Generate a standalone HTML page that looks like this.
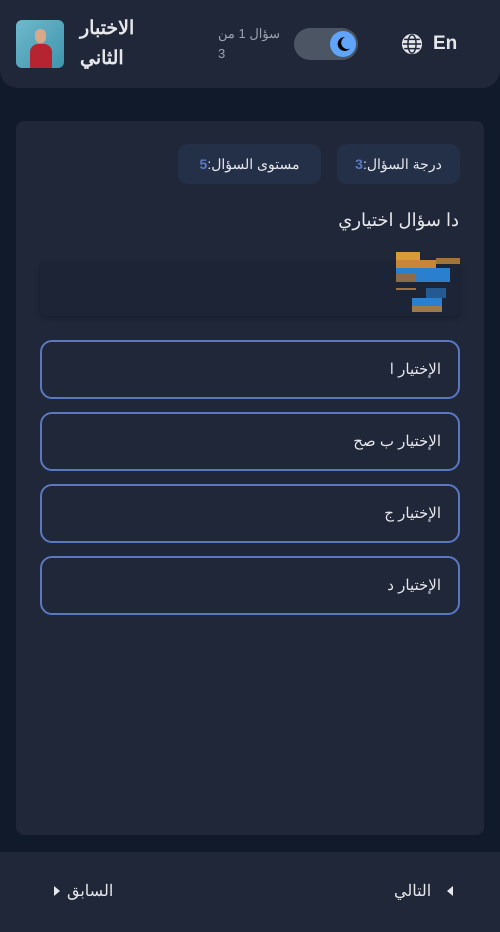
<!DOCTYPE html>
<html><head><meta charset="utf-8"><style>
*{margin:0;padding:0;box-sizing:border-box}
body{width:500px;height:932px;background:#111a2b;font-family:"Liberation Sans","Noto Sans CJK SC",sans-serif;color:#e5e7eb;position:relative;overflow:hidden}
.a{position:absolute}
.hdr{left:0;top:0;width:500px;height:88px;background:#1f2739;border-radius:0 0 18px 18px}
.card{left:16px;top:121px;width:468px;height:714px;background:#1f2739;border-radius:8px}
.badge{top:144px;height:40px;background:#242f48;border-radius:10px;font-size:14px;line-height:40px;text-align:center;direction:rtl;color:#e5e7eb}
.badge b{color:#5b78c2;font-weight:bold}
.opt{left:40px;width:420px;height:59px;border:2px solid #5a78c0;border-radius:12px;direction:rtl;text-align:right;padding-right:17px;line-height:55px;font-size:15px;color:#e5e7eb}
.ft{left:0;top:852px;width:500px;height:80px;background:#1f2739}
</style></head><body>
<div class="a hdr"></div>
<div class="a" style="left:16px;top:20px;width:48px;height:48px;border-radius:6px;background:linear-gradient(135deg,#6fb8cc,#3e95ad);overflow:hidden">
 <div class="a" style="left:14px;top:24px;width:22px;height:24px;background:#b52430;border-radius:8px 8px 0 0"></div>
 <div class="a" style="left:19px;top:9px;width:11px;height:14px;background:#d9a88a;border-radius:5px"></div>
</div>
<div class="a" style="left:80px;top:14px;width:64px;font-size:19px;font-weight:bold;line-height:30px;direction:rtl;text-align:left;color:#e5e7eb">الاختبار الثاني</div>
<div class="a" style="left:218px;top:24px;width:70px;font-size:13px;line-height:20px;color:#9ca3af;direction:rtl;text-align:left">سؤال 1 من 3</div>
<div class="a" style="left:294px;top:28px;width:64px;height:32px;border-radius:16px;background:#4b5563"></div>
<div class="a" style="left:330px;top:31px;width:26px;height:26px;border-radius:50%;background:#60a5fa"></div>
<svg class="a" style="left:333px;top:34px" width="20" height="20" viewBox="0 0 20 20"><path d="M12 3a7 7 0 1 0 5 11.5A6 6 0 0 1 12 3z" fill="#000"/></svg>
<svg class="a" style="left:401px;top:33px" width="22" height="22" viewBox="0 0 24 24" fill="none" stroke="#e5e7eb" stroke-width="2"><circle cx="12" cy="12" r="10" fill="#e5e7eb"/><g stroke="#1f2739" stroke-width="1.6"><path d="M2 12h20M3.5 7h17M3.5 17h17"/><ellipse cx="12" cy="12" rx="4.5" ry="10"/></g></svg>
<div class="a" style="left:433px;top:33px;font-size:19px;font-weight:bold;color:#e5e7eb">En</div>

<div class="a card"></div>
<div class="a badge" style="left:337px;width:123px">درجة السؤال:<b>3</b></div>
<div class="a badge" style="left:178px;width:143px">مستوى السؤال:<b>5</b></div>
<div class="a" style="left:100px;top:210px;width:359px;font-size:18px;direction:rtl;text-align:right;color:#e5e7eb">دا سؤال اختياري</div>
<div class="a" style="left:40px;top:262px;width:420px;height:54px;background:#1c2435;border-radius:6px;box-shadow:0 2px 6px rgba(0,0,0,.25)"></div>
<div class="a" style="left:396px;top:252px;width:64px;height:64px">
 <div class="a" style="left:0;top:0;width:24px;height:8px;background:#d99a3a"></div>
 <div class="a" style="left:0;top:8px;width:40px;height:8px;background:#c98638"></div>
 <div class="a" style="left:40px;top:6px;width:24px;height:6px;background:#d99a3a;opacity:.7"></div>
 <div class="a" style="left:0;top:16px;width:54px;height:14px;background:#2b7fcf"></div>
 <div class="a" style="left:0;top:22px;width:20px;height:8px;background:#8b6b48"></div>
 <div class="a" style="left:0;top:36px;width:20px;height:2px;background:#a07040"></div>
 <div class="a" style="left:30px;top:36px;width:20px;height:10px;background:#2b7fcf;opacity:.6"></div>
 <div class="a" style="left:16px;top:46px;width:30px;height:14px;background:#2b7fcf"></div>
 <div class="a" style="left:16px;top:54px;width:30px;height:6px;background:#9c7b4a"></div>
</div>
<div class="a opt" style="top:340px">الإختيار ا</div>
<div class="a opt" style="top:412px">الإختيار ب صح</div>
<div class="a opt" style="top:484px">الإختيار ج</div>
<div class="a opt" style="top:556px">الإختيار د</div>

<div class="a ft"></div>
<div class="a" style="left:394px;top:881px;font-size:16px;color:#e5e7eb">التالي</div>
<svg class="a" style="left:446px;top:886px" width="8" height="10"><path d="M7 0v10L1 5z" fill="#e5e7eb"/></svg>
<div class="a" style="left:67px;top:881px;font-size:16px;color:#e5e7eb">السابق</div>
<svg class="a" style="left:53px;top:886px" width="8" height="10"><path d="M1 0v10l6-5z" fill="#e5e7eb"/></svg>
</body></html>
